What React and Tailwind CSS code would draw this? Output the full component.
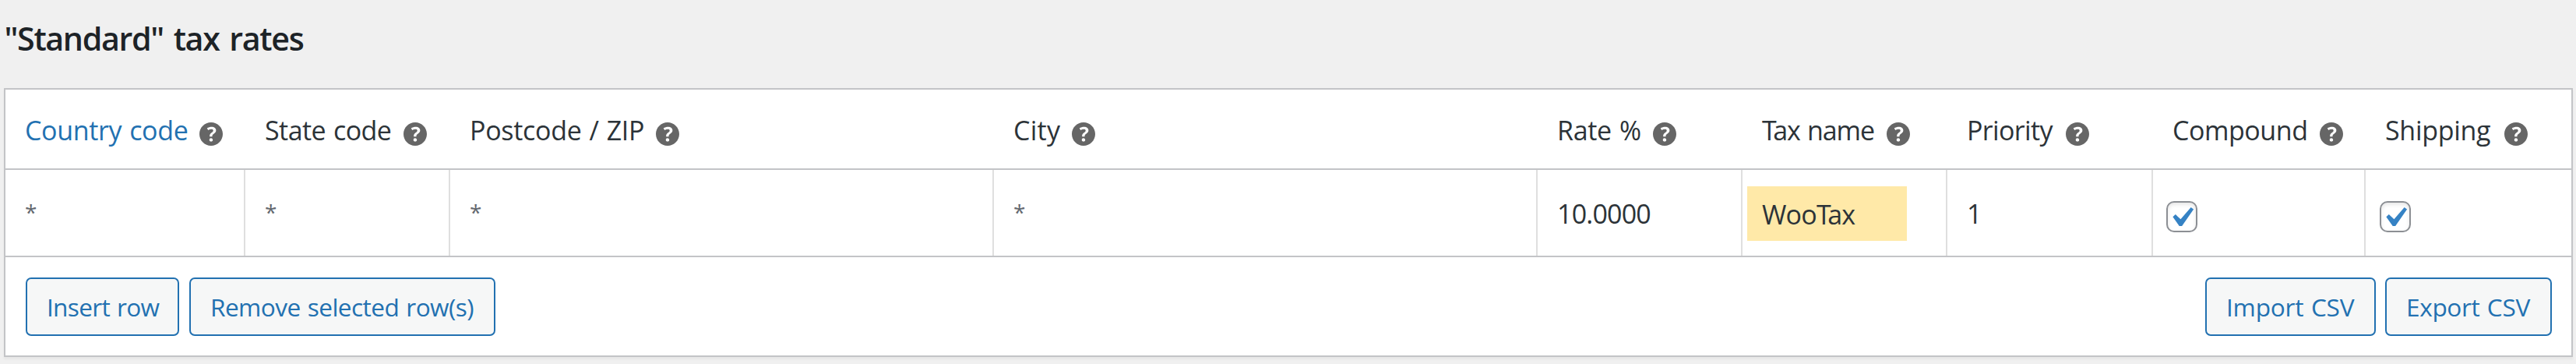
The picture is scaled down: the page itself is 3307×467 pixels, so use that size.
const columns = [
  { label: 'Country code', width: 'w-[224px]', tracking: 'tracking-[-0.35px]', link: true },
  { label: 'State code', width: 'w-[178px]', tracking: 'tracking-[-0.55px]' },
  { label: 'Postcode / ZIP', width: 'w-[239px]', tracking: 'tracking-[-0.3px]' },
  { label: 'City', width: 'w-[75px]', tracking: 'tracking-[0.3px]' },
  { label: 'Rate %', width: 'w-[123px]', tracking: 'tracking-[-0.3px]' },
  { label: 'Tax name', width: 'w-[160px]', tracking: 'tracking-[-1.1px]' },
  { label: 'Priority', width: 'w-[127px]', tracking: 'tracking-[-0.65px]' },
  { label: 'Compound', width: 'w-[189px]', tracking: 'tracking-[-0.45px]' },
  { label: 'Shipping', width: 'w-[153px]', tracking: 'tracking-[-0.3px]' },
]

const gridCols = 'grid grid-cols-[308px_263px_698px_698px_263px_263px_264px_273px_264px]'

function HelpIcon() {
  return (
    <svg className="size-[30px] shrink-0 mt-[13px]" viewBox="3 3 14 14" fill="#666">
      <path d="M17 10c0-3.87-3.14-7-7-7-3.87 0-7 3.13-7 7s3.13 7 7 7c3.86 0 7-3.13 7-7zm-6.3 1.48H9.14v-.43c0-.38.08-.7.24-.98s.46-.57.88-.89c.41-.29.68-.53.81-.71.14-.18.2-.39.2-.62 0-.25-.09-.44-.28-.58-.19-.13-.45-.19-.79-.19-.58 0-1.25.19-2 .57l-.64-1.28c.87-.49 1.8-.74 2.77-.74.81 0 1.45.2 1.92.58.48.39.71.91.71 1.55 0 .43-.09.8-.29 1.11-.19.32-.57.67-1.11 1.06-.38.28-.61.49-.71.63-.1.15-.15.34-.15.57v.35zm-1.47 2.74c-.18-.17-.27-.42-.27-.73 0-.33.08-.58.26-.75s.43-.25.77-.25c.32 0 .57.09.75.26s.27.42.27.74c0 .3-.09.55-.27.72-.18.18-.43.27-.75.27-.33 0-.58-.09-.76-.26z" />
    </svg>
  )
}

// "Ta" is kerned by hand
function Kerned({ text }) {
  const i = text.indexOf('Ta')
  if (i < 0) return text
  return (
    <>
      {text.slice(0, i)}
      <span className="tracking-[-4.5px]">T</span>
      {text.slice(i + 1)}
    </>
  )
}

function Cell({ className = '', children }) {
  return (
    <div className={`flex items-center border-r-2 border-[#dfdfdf] last:border-r-0 ${className}`}>
      {children}
    </div>
  )
}

function Wildcard() {
  return (
    <Cell className="pl-[25px]">
      <span className="text-[28px] leading-none text-[#646970] -mt-[2px]">*</span>
    </Cell>
  )
}

function Checkbox() {
  return (
    <span className="flex size-10 mt-[10px] rounded-[10px] border-2 border-[#8c8f94] bg-white shadow-[inset_0_2.5px_5px_rgba(0,0,0,0.1)]">
      <svg className="size-9" viewBox="3.3 2.57 14 14" fill="#3582c4">
        <path d="M14.83 4.89l1.34.94-5.81 8.38H9.02L5.78 9.67l1.34-1.25 2.57 2.4z" />
      </svg>
    </span>
  )
}

function Button({ className, children }) {
  return (
    <button
      className={`flex items-center h-[75px] pl-[25px] border-2 border-[#2271b1] rounded-[7px] bg-[#f6f7f7] text-[31.6px] leading-none text-[#2271b1] whitespace-nowrap [word-spacing:1.5px] ${className}`}
    >
      {children}
    </button>
  )
}

export default function App() {
  return (
    <div className="w-[3307px] h-[467px] overflow-hidden bg-[#f0f0f0] font-['Open_Sans','Noto_Sans',sans-serif] text-[34px] text-[#2c3338]">
      <h3 className="h-[113px] pt-[20px] pl-[5.5px] text-[41.2px] leading-[58px] font-semibold tracking-[-1.35px] [word-spacing:3.5px] text-[#1d2327]">
        "Standard" tax rates
      </h3>
      <div className="w-[3298px] h-[345px] ml-[5px] border-2 border-[#c3c4c7] bg-white shadow-[0_2.5px_2.5px_rgba(0,0,0,0.04)]">
        <div className={`${gridCols} h-[103px] border-b-2 border-[#c3c4c7]`}>
          {columns.map((col) => (
            <div key={col.label} className="flex items-center pl-[25px] pb-px">
              <span
                className={`mt-[4px] leading-none whitespace-nowrap [word-spacing:1.5px] ${col.width} ${col.tracking} ${col.link ? 'text-[#2271b1]' : ''}`}
              >
                <Kerned text={col.label} />
              </span>
              <HelpIcon />
            </div>
          ))}
        </div>
        <div className={`${gridCols} h-[112px] border-b-2 border-[#c3c4c7]`}>
          <Wildcard />
          <Wildcard />
          <Wildcard />
          <Wildcard />
          <Cell className="pl-[25px] pt-[2px] tracking-[-0.8px]">10.0000</Cell>
          <Cell className="pl-[6px]">
            <span className="flex items-center w-[205px] h-[70px] pl-[19px] pt-[2px] mt-[2px] bg-[#ffe9a8] tracking-[-0.8px]">
              <span>
                <Kerned text="WooTax" />
              </span>
            </span>
          </Cell>
          <Cell className="pl-[25px] pt-[2px]">1</Cell>
          <Cell className="pl-[17px]">
            <Checkbox />
          </Cell>
          <Cell className="pl-[18px]">
            <Checkbox />
          </Cell>
        </div>
        <div className="flex items-start pt-[26px] pl-[26px] pr-[25px]">
          <Button className="w-[197px] tracking-[-0.7px]">Insert row</Button>
          <Button className="w-[393px] ml-[13px] tracking-[-0.57px]">Remove selected row(s)</Button>
          <Button className="w-[219px] ml-auto tracking-[-0.2px]">Import CSV</Button>
          <Button className="w-[214px] ml-[12px] tracking-[-0.35px]">Export CSV</Button>
        </div>
      </div>
    </div>
  )
}
